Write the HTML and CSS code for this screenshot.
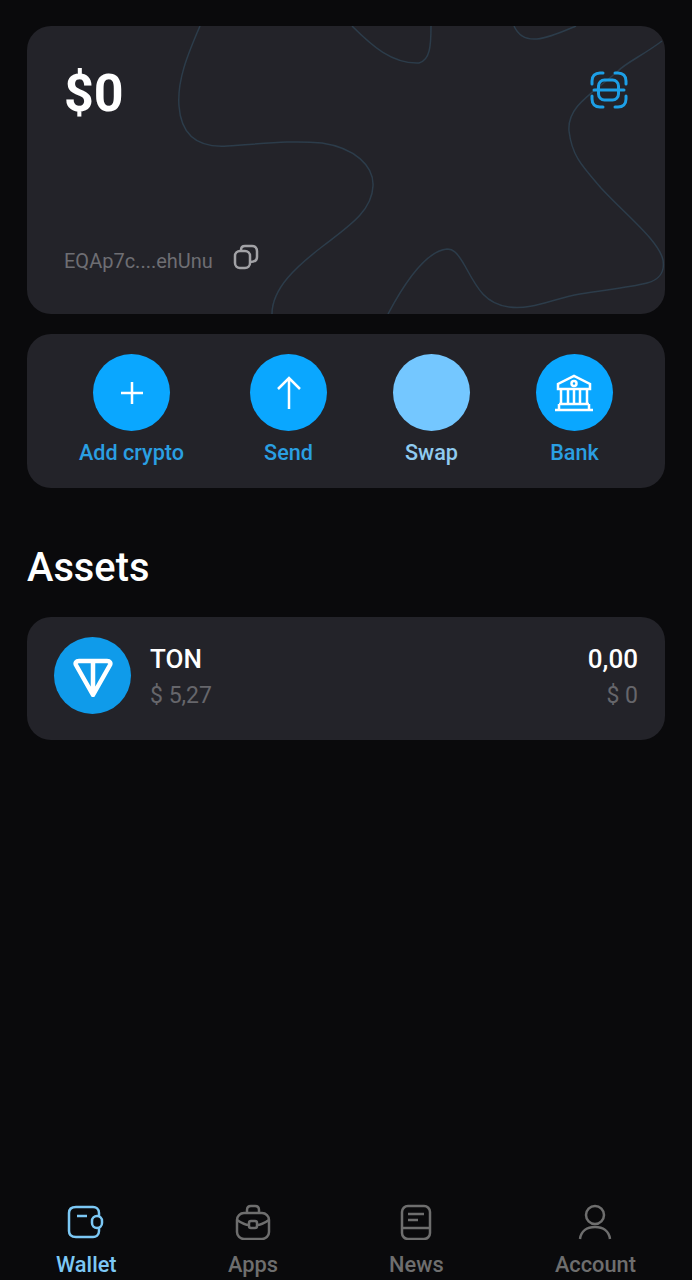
FILE: index.html
```html
<!DOCTYPE html>
<html lang="en">
<head>
    <meta charset="UTF-8">
    <title>Wallet</title>
    <link rel="stylesheet" href="styles.css">
</head>
<body>
<div class="page">
    <section class="balance">
        <svg class="waves" viewBox="0 0 638 288" fill="none">
            <path d="M173 0C160 30 150 55 152 80C154 108 170 122 200 120C235 118 262 114 295 117C328 122 347 140 346 160C345 185 322 200 296 220C270 240 245 262 245 288"/>
            <path d="M325 0C345 20 365 38 392 37C403 34 404 20 404 0"/>
            <path d="M487 0C491 9 498 14 510 13C522 12 535 6 549 0"/>
            <path d="M635 15C615 30 600 36 591 45C565 68 540 80 542 105C545 130 555 140 574 162C600 190 632 215 636 234C638 246 632 254 620 257C600 262 575 264 553 268C525 273 505 284 482 281C458 278 450 262 438 240C430 226 426 223 420 223C400 225 378 256 361 288"/>
        </svg>
        <div class="balance-top">
            <div class="amount">$0</div>
            <svg class="scan" viewBox="0 0 38 38" fill="none">
                <path d="M2 13V10C2 5 5 2 10 2H13M25 2H28C33 2 36 5 36 10V13M36 25V28C36 33 33 36 28 36H25M13 36H10C5 36 2 33 2 28V25"/>
                <rect x="8.500" y="9" width="20" height="20" rx="6"/>
                <path d="M4 19H34"/>
            </svg>
        </div>
        <div class="address">
            <span>EQAp7c....ehUnu</span>
            <svg class="copy" viewBox="0 0 26 26" fill="none">
                <rect x="2" y="7" width="15" height="17" rx="5"/>
                <path d="M8 7V6C8 3 10 2 12 2H19C22 2 24 4 24 7V13C24 16 22 18 17 18"/>
            </svg>
        </div>
    </section>

    <section class="actions">
        <div class="action">
            <div class="circle">
                <svg viewBox="0 0 24 24" fill="none" class="ico-plus"><path d="M12 1V23M1 12H23"/></svg>
            </div>
            <span>Add crypto</span>
        </div>
        <div class="action">
            <div class="circle">
                <svg viewBox="0 0 26 34" fill="none" class="ico-send"><path d="M13 33V2M2 13L13 2L24 13"/></svg>
            </div>
            <span>Send</span>
        </div>
        <div class="action swap">
            <div class="circle"></div>
            <span>Swap</span>
        </div>
        <div class="action">
            <div class="circle">
                <svg viewBox="0 0 40 38" fill="none" class="ico-bank">
                    <path d="M4 15V10L20 2L36 10V15Z"/>
                    <circle cx="20" cy="9.500" r="2.500"/>
                    <path d="M7 15V30M14 15V30M20 15V30M26 15V30M33 15V30M5 30H35M1 36H39M5 30V36M35 30V36"/>
                </svg>
            </div>
            <span>Bank</span>
        </div>
    </section>

    <h2 class="title">Assets</h2>

    <section class="asset">
        <div class="ton">
            <svg viewBox="0 0 40 42" fill="none">
                <path d="M6 6H34C37 6 38 8 37 10L20 40L3 10C2 8 3 6 6 6ZM20 6V40"/>
            </svg>
        </div>
        <div class="asset-col">
            <div class="asset-main">TON</div>
            <div class="asset-sub">$ 5,27</div>
        </div>
        <div class="asset-col right">
            <div class="asset-main">0,00</div>
            <div class="asset-sub">$ 0</div>
        </div>
    </section>

    <nav class="tabs">
        <div class="tab cur">
            <svg viewBox="0 0 38 34" fill="none">
                <path d="M32 11V8C32 4 29 2 26 2H9C5 2 2 4 2 8V26C2 30 5 32 9 32H26C29 32 32 30 32 26V23"/>
                <rect x="25" y="11" width="10" height="12" rx="5"/>
                <path d="M10 11H20"/>
            </svg>
            <span>Wallet</span>
        </div>
        <div class="tab">
            <svg viewBox="0 0 36 36" fill="none">
                <path d="M12 9V6C12 3 14 2 16 2H20C22 2 24 3 24 6V9"/>
                <rect x="2" y="9" width="32" height="26" rx="7"/>
                <path d="M2 16C8 20 12 21 14 21M34 16C28 20 24 21 22 21"/>
                <rect x="14" y="17" width="8" height="7" rx="2"/>
            </svg>
            <span>Apps</span>
        </div>
        <div class="tab">
            <svg viewBox="0 0 32 36" fill="none">
                <rect x="2" y="2" width="28" height="33" rx="6"/>
                <path d="M2 24H30M8 10H24M8 16H18"/>
            </svg>
            <span>News</span>
        </div>
        <div class="tab">
            <svg viewBox="0 0 34 36" fill="none">
                <circle cx="17" cy="11" r="9"/>
                <path d="M2 35C3 27 9 23 17 23C25 23 31 27 32 35"/>
            </svg>
            <span>Account</span>
        </div>
    </nav>
</div>
</body>
</html>
```

FILE: styles.css
```css
*{
    margin:0;
    padding:0;
    box-sizing: border-box;
}
body{
    background: #0a0a0c;
    font-family: Roboto, "Liberation Sans", sans-serif;
    color: #fff;
}
svg{
    display: block;
}
.page{
    width:692px;
    height:1280px;
    padding:26px 27px 0;
    display: flex;
    flex-direction: column;
    overflow: hidden;
}
.balance{
    height:288px;
    background: #232329;
    border-radius:24px;
    padding:37px 37px 0;
    position: relative;
    overflow: hidden;
}
.waves{
    position: absolute;
    top:0;
    left:0;
    width:638px;
    height:288px;
}
.waves path{
    stroke: #2c3c4a;
    stroke-width:1.500;
}
.balance-top{
    display: flex;
    justify-content: space-between;
    align-items: flex-start;
    position: relative;
    height:186px;
}
.amount{
    font-size:52px;
    font-weight:700;
    line-height:62px;
}
.scan{
    width:38px;
    height:38px;
    margin-top:8px;
}
.scan path,.scan rect{
    stroke: #1d9fe6;
    stroke-width:3;
    stroke-linecap: round;
}
.address{
    display: flex;
    align-items: center;
    gap:21px;
    position: relative;
    font-size:20px;
    color: #6e6e73;
}
.copy{
    width:26px;
    height:26px;
    margin-top:-8px;
    margin-left:-1px;
}
.copy rect,.copy path{
    stroke: #a2a2a6;
    stroke-width:2.500;
}
.actions{
    margin-top:20px;
    height:154px;
    background: #232329;
    border-radius:24px;
    padding:20px 52px 0;
    display: flex;
    justify-content: space-between;
}
.action{
    display: flex;
    flex-direction: column;
    align-items: center;
    font-size:21.600px;
    font-weight:500;
    color: #2a9fe2;
}
.action span{
    margin-top:8px;
    line-height:28px;
}
.circle{
    width:77px;
    height:77px;
    border-radius:50%;
    background: #0aa7ff;
    display: flex;
    align-items: center;
    justify-content: center;
}
.circle path,.circle circle{
    stroke: #fff;
    stroke-width:2.500;
}
.ico-plus{
    width:24px;
    height:24px;
}
.ico-send{
    width:26px;
    height:34px;
}
.ico-bank{
    width:40px;
    height:38px;
}
.swap{
    color: #8fcbf0;
}
.swap .circle{
    background: #74c7ff;
}
.title{
    margin-top:57px;
    font-size:39.800px;
    font-weight:500;
    line-height:46px;
}
.asset{
    margin-top:26px;
    height:123px;
    background: #232329;
    border-radius:24px;
    padding:20px 27px;
    display: flex;
    align-items: flex-start;
}
.ton{
    width:77px;
    height:77px;
    border-radius:50%;
    background: #0f9bea;
    display: flex;
    align-items: center;
    justify-content: center;
    margin-right:19px;
}
.ton svg{
    width:40px;
    height:42px;
}
.ton path{
    stroke: #fff;
    stroke-width:4.500;
    stroke-linejoin: round;
}
.asset-col{
    display: flex;
    flex-direction: column;
    gap:7px;
    margin-top:7px;
}
.asset-col.right{
    margin-left:auto;
    align-items: flex-end;
}
.asset-main{
    font-size:26px;
    font-weight:500;
    line-height:31px;
}
.asset-sub{
    font-size:23px;
    line-height:28px;
    color: #66666b;
}
.tabs{
    margin:auto 29px 3px;
    height:73px;
    display: flex;
    justify-content: space-between;
    color: #6e6e6e;
}
.tab{
    display: flex;
    flex-direction: column;
    align-items: center;
    justify-content: space-between;
    font-size:21.800px;
    font-weight:500;
}
.tab svg{
    height:36px;
    width:38px;
}
.tab path,.tab rect,.tab circle{
    stroke: #6e6e6e;
    stroke-width:2.500;
}
.tab.cur{
    color: #7cc8f5;
}
.tab.cur path,.tab.cur rect{
    stroke: #7cc8f5;
}
```
